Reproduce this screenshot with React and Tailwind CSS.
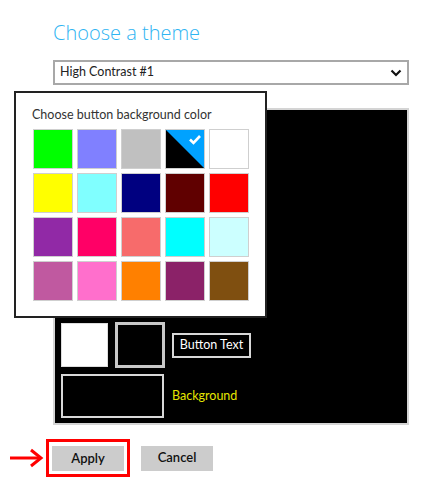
import React from "react";

const swatches = [
  "#00ff00", "#8080ff", "#c0c0c0", "selected", "#ffffff",
  "#ffff00", "#80ffff", "#000080", "#600000", "#ff0000",
  "#9129a6", "#ff0066", "#f76b6b", "#00ffff", "#ccffff",
  "#c059a0", "#ff6fcc", "#ff8000", "#8b2268", "#7f4f10",
];

const Swatch = ({ color }) => {
  if (color === "selected") {
    return (
      <div className="relative h-10 w-10 border border-[#cfcfcf] bg-black overflow-hidden">
        <svg className="absolute inset-0" width="38" height="38" viewBox="0 0 38 38">
          <polygon points="0,0 38,0 38,38" fill="#00a2ff" />
          <path d="M24 9.5 L27.5 13 L34 6" stroke="#fff" strokeWidth="2.6" fill="none" />
        </svg>
      </div>
    );
  }
  return (
    <div
      className="h-10 w-10 border border-[#cfcfcf]"
      style={{ backgroundColor: color }}
    />
  );
};

const ColorPopup = () => (
  <div className="absolute left-[14px] top-[91px] w-[253px] h-[227px] border-2 border-[#222] bg-white pl-[17px] pt-[14px] z-10">
    <p className="text-[12.5px] text-[#333] leading-4 ml-[-1px]">Choose button background color</p>
    <div className="mt-[6px] grid grid-cols-[repeat(5,40px)] gap-1">
      {swatches.map((c, i) => (
        <Swatch key={i} color={c} />
      ))}
    </div>
  </div>
);

export default function App() {
  return (
    <div
      className="relative w-[434px] h-[493px] bg-white"
      style={{ fontFamily: 'Lato, "Noto Sans", sans-serif' }}
    >
      <div className="pl-[53px] pt-[19px] w-[409px]">
        <h1
          className="text-[20px] font-light leading-7 text-[#2fb4f2]"
          style={{ fontFamily: '"Open Sans", "Noto Sans", sans-serif' }}
        >
          Choose a theme
        </h1>
        <div className="mt-[13px] h-[25px] border-2 border-[#a8a8a8] flex items-center justify-between pl-[5px] pr-[5px]">
          <span className="text-[12.5px] text-[#222]">High Contrast #1</span>
          <svg width="12" height="8" viewBox="0 0 12 8">
            <path d="M1.5 1.5 L6 6 L10.5 1.5" stroke="#111" strokeWidth="2.2" fill="none" />
          </svg>
        </div>
        <div className="mt-[23px] h-[317px] border-2 border-[#d4d4d4] bg-black flex flex-col justify-end pl-[6px] pb-[5px]">
          <div className="flex items-center gap-[7px]">
            <div className="h-[44px] w-[47px] bg-white border border-[#ddd]" />
            <div className="h-[46px] w-[50px] bg-black border-[3px] border-[#c8c8c8]" />
            <div className="h-[25px] w-[79px] border-2 border-[#d8d8d8] flex items-center justify-center text-[12.5px] text-white">
              Button Text
            </div>
          </div>
          <div className="mt-[6px] flex items-center gap-[8px]">
            <div className="h-[44px] w-[103px] border-2 border-[#d8d8d8]" />
            <span className="text-[12.5px] text-[#e6e600]">Background</span>
          </div>
        </div>
      </div>
      <ColorPopup />
      <div className="mt-[14px] flex items-center pl-[10px]">
        <svg width="34" height="20" viewBox="0 0 34 20">
          <line x1="0" y1="10" x2="30" y2="10" stroke="#f00" strokeWidth="3" />
          <path d="M21 2 L31 10 L21 18" stroke="#f00" strokeWidth="3" fill="none" />
        </svg>
        <div className="ml-[2px] border-[3px] border-[#f00] p-[3px]">
          <button className="h-[25px] w-[72px] bg-[#cccccc] text-[13px] font-semibold text-[#111]">
            Apply
          </button>
        </div>
        <button className="ml-[11px] h-[25px] w-[72px] bg-[#cccccc] text-[13px] font-semibold text-[#111]">
          Cancel
        </button>
      </div>
    </div>
  );
}
